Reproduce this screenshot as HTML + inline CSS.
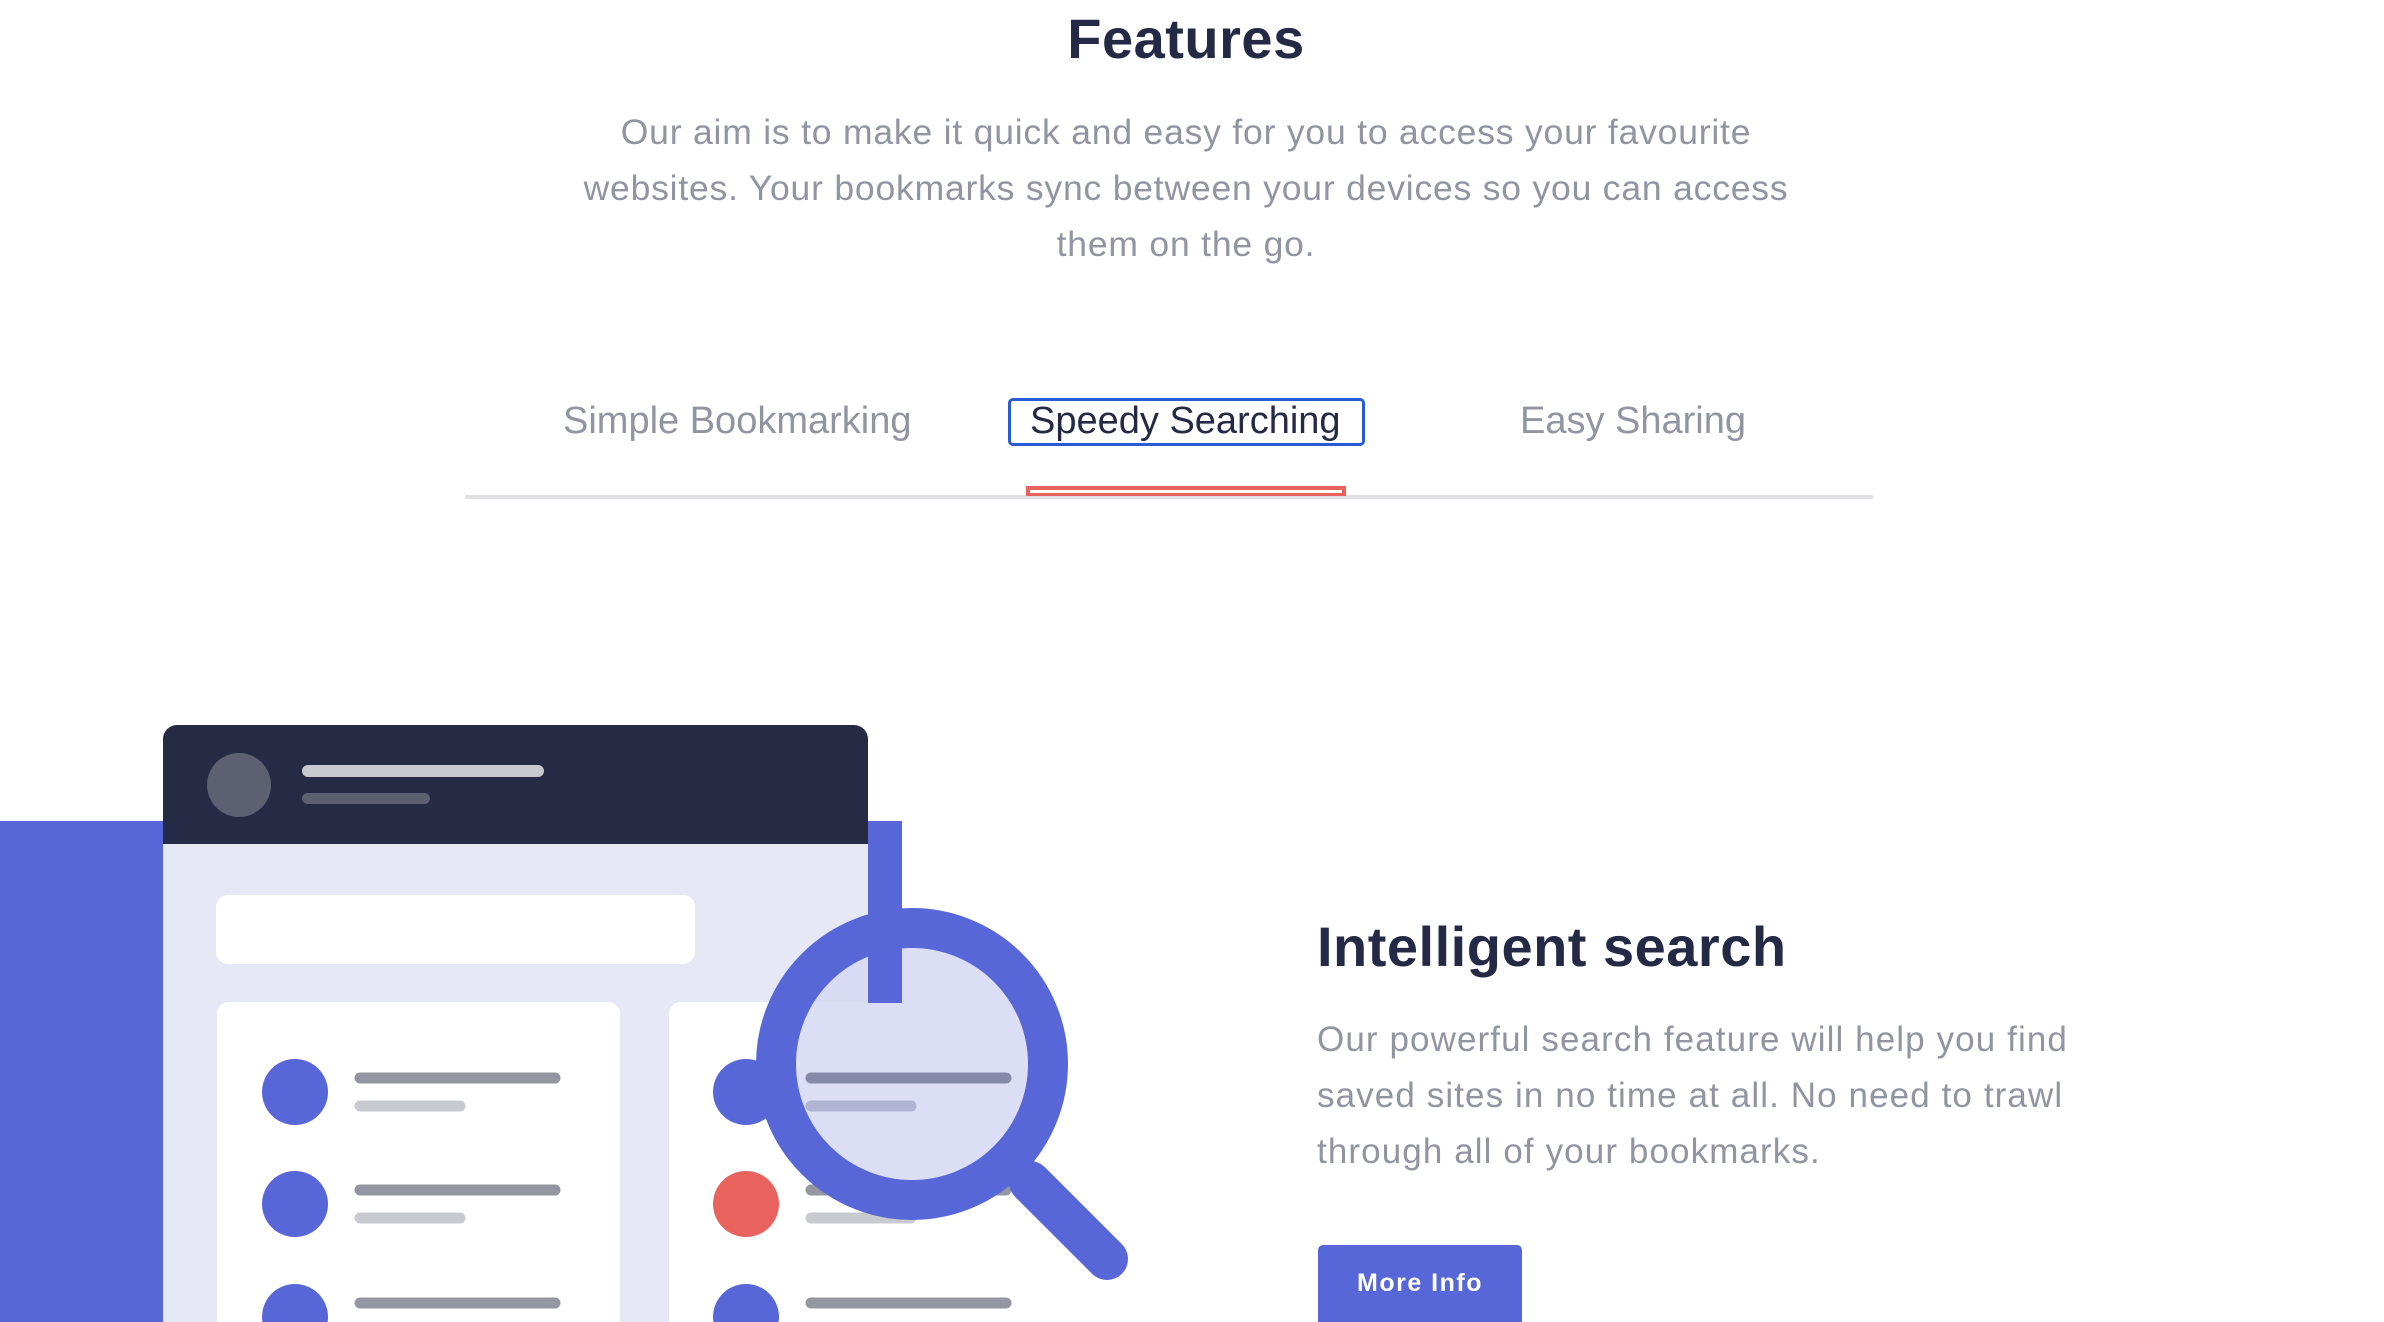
<!DOCTYPE html>
<html><head><meta charset="utf-8"><style>
html,body{margin:0;padding:0;width:2384px;height:1322px;overflow:hidden;background:#fff;font-family:"Liberation Sans",sans-serif;position:relative}
.a{position:absolute}
h1{position:absolute;margin:0;left:0;width:2372px;top:6px;text-align:center;font-size:56px;color:#242a45;font-weight:bold;letter-spacing:0.5px}
.intro{position:absolute;left:0;width:2372px;top:104px;text-align:center;font-size:35.5px;line-height:56px;color:#9194a1;letter-spacing:0.8px;white-space:nowrap}
.tab{position:absolute;top:396px;font-size:38px;line-height:50px;color:#9194a1}
</style></head><body>
<h1>Features</h1>
<div class="intro">Our aim is to make it quick and easy for you to access your favourite<br>websites. Your bookmarks sync between your devices so you can access<br>them on the go.</div>
<div class="tab" style="left:563px">Simple Bookmarking</div>
<div class="a" style="left:1008px;top:398px;width:351px;height:42px;border:3px solid #2a5bd7;border-radius:5px"></div>
<div class="tab" style="left:1030px;color:#242a45">Speedy Searching</div>
<div class="tab" style="left:1520px">Easy Sharing</div>
<div class="a" style="left:465px;top:495px;width:1408px;height:4px;background:#e2e2e5"></div>
<div class="a" style="left:1026px;top:486px;width:320px;height:10px;background:#e8625e"></div>
<div class="a" style="left:1030px;top:490px;width:312px;height:3px;background:#fff"></div>

<div class="a" style="left:0;top:821px;width:901px;height:501px;background:#5767d8"></div>
<div class="a" style="left:163px;top:725px;width:705px;height:119px;background:#252a45;border-radius:14px 14px 0 0"></div>
<div class="a" style="left:207px;top:753px;width:64px;height:64px;border-radius:50%;background:#5d6071"></div>
<div class="a" style="left:302px;top:765px;width:242px;height:12px;border-radius:6px;background:#c9cad0"></div>
<div class="a" style="left:302px;top:793px;width:128px;height:11px;border-radius:6px;background:#5d6071"></div>
<div class="a" style="left:163px;top:844px;width:705px;height:478px;background:#e6e8f6"></div>
<div class="a" style="left:216px;top:895px;width:479px;height:69px;border-radius:12px;background:#fff"></div>
<div class="a" style="left:217px;top:1002px;width:403px;height:330px;border-radius:12px;background:#fff"></div>
<div class="a" style="left:669px;top:1002px;width:403px;height:330px;border-radius:12px;background:#fff"></div>
<svg class="a" style="left:0;top:0" width="2384" height="1322">
<g fill="#5767d8">
<circle cx="295" cy="1092" r="33"/><circle cx="295" cy="1204" r="33"/><circle cx="295" cy="1317" r="33"/>
<circle cx="746" cy="1092" r="33"/><circle cx="746" cy="1317" r="33"/></g>
<circle cx="746" cy="1204" r="33" fill="#e8625e"/>
<g stroke-linecap="round" stroke-width="11">
<line x1="360" y1="1078" x2="555" y2="1078" stroke="#9496a2"/><line x1="360" y1="1106" x2="460" y2="1106" stroke="#c9cad0"/>
<line x1="360" y1="1190" x2="555" y2="1190" stroke="#9496a2"/><line x1="360" y1="1218" x2="460" y2="1218" stroke="#c9cad0"/>
<line x1="360" y1="1303" x2="555" y2="1303" stroke="#9496a2"/>
<line x1="811" y1="1190" x2="1006" y2="1190" stroke="#9496a2"/><line x1="811" y1="1218" x2="911" y2="1218" stroke="#c9cad0"/>
<line x1="811" y1="1303" x2="1006" y2="1303" stroke="#9496a2"/></g>
<rect x="868" y="821" width="34" height="182" fill="#5767d8"/>
<line x1="1030" y1="1182" x2="1107" y2="1259" stroke="#5767d8" stroke-width="42" stroke-linecap="round"/>
<circle cx="912" cy="1064" r="136" fill="#d5d8f2" fill-opacity="0.85" stroke="#5767d8" stroke-width="40"/>
<rect x="868" y="947" width="34" height="56" fill="#5767d8"/>
<line x1="811" y1="1078" x2="1006" y2="1078" stroke="#8689a8" stroke-width="11" stroke-linecap="round"/>
<line x1="811" y1="1106" x2="911" y2="1106" stroke="#b0b4d3" stroke-width="11" stroke-linecap="round"/>
</svg>

<div class="a" style="left:1317px;top:914px;font-size:56px;font-weight:bold;color:#242a45;white-space:nowrap;letter-spacing:0.5px">Intelligent search</div>
<div class="a" style="left:1317px;top:1012px;font-size:35px;line-height:56px;color:#9194a1;letter-spacing:1.1px;white-space:nowrap">Our powerful search feature will help you find<br>saved sites in no time at all. No need to trawl<br>through all of your bookmarks.</div>
<div class="a" style="left:1318px;top:1245px;width:204px;height:90px;background:#5767d8;border-radius:5px;color:#fff;font-weight:bold;font-size:25px;letter-spacing:1.5px;text-align:center;line-height:76px">More Info</div>
</body></html>
